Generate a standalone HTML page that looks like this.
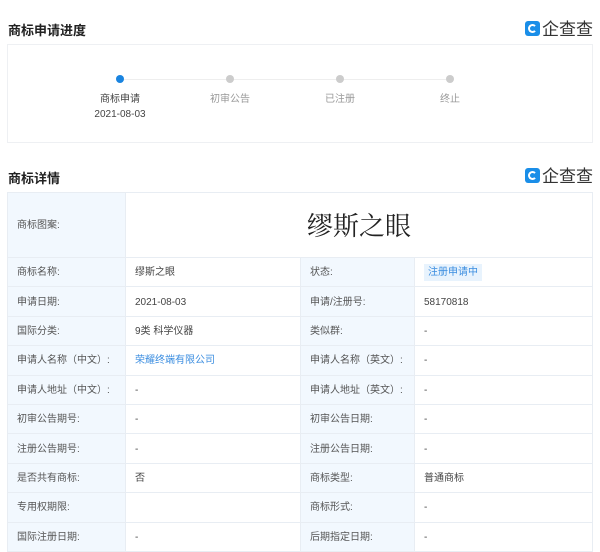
<!DOCTYPE html>
<html><head><meta charset="utf-8"><style>
body{margin:0;width:600px;height:549px;overflow:hidden;background:#fff;font-family:"Liberation Sans","Noto Sans CJK SC",sans-serif;color:#333;position:relative}
.h{position:absolute;left:8px;font-size:13px;font-weight:bold;color:#222}
.logo{position:absolute;right:7px;font-size:17px;line-height:18px;color:#333;display:flex;align-items:center;white-space:nowrap;font-family:"Noto Sans CJK SC",sans-serif}
.logo i{display:inline-block;width:15px;height:15px;background:#1a8ee8;border-radius:3px;margin-right:2px;position:relative;flex:none}
.logo i:after{content:"";position:absolute;left:3px;top:3px;width:5px;height:5px;border:2px solid #fff;border-radius:50%;border-right-color:transparent}
.box{position:absolute;left:7px;top:44px;width:584px;height:97px;border:1px solid #eef0f3}
.dot{position:absolute;top:75px;width:8px;height:8px;border-radius:50%;background:#ccc}
.ln{position:absolute;top:79px;height:1px;background:#eee}
.st{position:absolute;top:92px;width:100px;text-align:center;font-size:10px;color:#999;line-height:15px}
table{position:absolute;left:7px;top:192px;width:585px;border-collapse:collapse;font-size:10px;table-layout:fixed}
td{border:1px solid #e8edf3;height:26.4px;padding:2px 0 0 9px;color:#444;vertical-align:middle;line-height:14px}
td.l{background:#f2f8fe;color:#555}
.tag{background:#e8f3fd;color:#3a8de0;padding:3px 4px}
a{color:#3a8de0;text-decoration:none}
</style></head><body>
<div class="h" style="top:20px">商标申请进度</div>
<div class="logo" style="top:19px"><i></i>企查查</div>
<div class="box"></div>
<div class="ln" style="left:124px;width:322px"></div>
<div class="dot" style="left:116px;background:#1a84e0"></div>
<div class="dot" style="left:226px"></div>
<div class="dot" style="left:336px"></div>
<div class="dot" style="left:446px"></div>
<div class="st" style="left:70px;color:#444">商标申请<br>2021-08-03</div>
<div class="st" style="left:180px">初审公告</div>
<div class="st" style="left:290px">已注册</div>
<div class="st" style="left:400px">终止</div>
<div class="h" style="top:168px">商标详情</div>
<div class="logo" style="top:166px"><i></i>企查查</div>
<table>
<colgroup><col style="width:118px"><col style="width:175px"><col style="width:114px"><col style="width:178px"></colgroup>
<tr><td class="l" style="height:62px">商标图案:</td><td colspan="3" style="text-align:center;font-size:26px;line-height:30px;color:#222;padding:0;font-family:'Noto Serif CJK SC',serif">缪斯之眼</td></tr>
<tr><td class="l">商标名称:</td><td>缪斯之眼</td><td class="l">状态:</td><td><span class="tag">注册申请中</span></td></tr>
<tr><td class="l">申请日期:</td><td>2021-08-03</td><td class="l">申请/注册号:</td><td>58170818</td></tr>
<tr><td class="l">国际分类:</td><td>9类 科学仪器</td><td class="l">类似群:</td><td>-</td></tr>
<tr><td class="l">申请人名称（中文）:</td><td><a>荣耀终端有限公司</a></td><td class="l">申请人名称（英文）:</td><td>-</td></tr>
<tr><td class="l">申请人地址（中文）:</td><td>-</td><td class="l">申请人地址（英文）:</td><td>-</td></tr>
<tr><td class="l">初审公告期号:</td><td>-</td><td class="l">初审公告日期:</td><td>-</td></tr>
<tr><td class="l">注册公告期号:</td><td>-</td><td class="l">注册公告日期:</td><td>-</td></tr>
<tr><td class="l">是否共有商标:</td><td>否</td><td class="l">商标类型:</td><td>普通商标</td></tr>
<tr><td class="l">专用权期限:</td><td></td><td class="l">商标形式:</td><td>-</td></tr>
<tr><td class="l">国际注册日期:</td><td>-</td><td class="l">后期指定日期:</td><td>-</td></tr>
</table>
</body></html>
